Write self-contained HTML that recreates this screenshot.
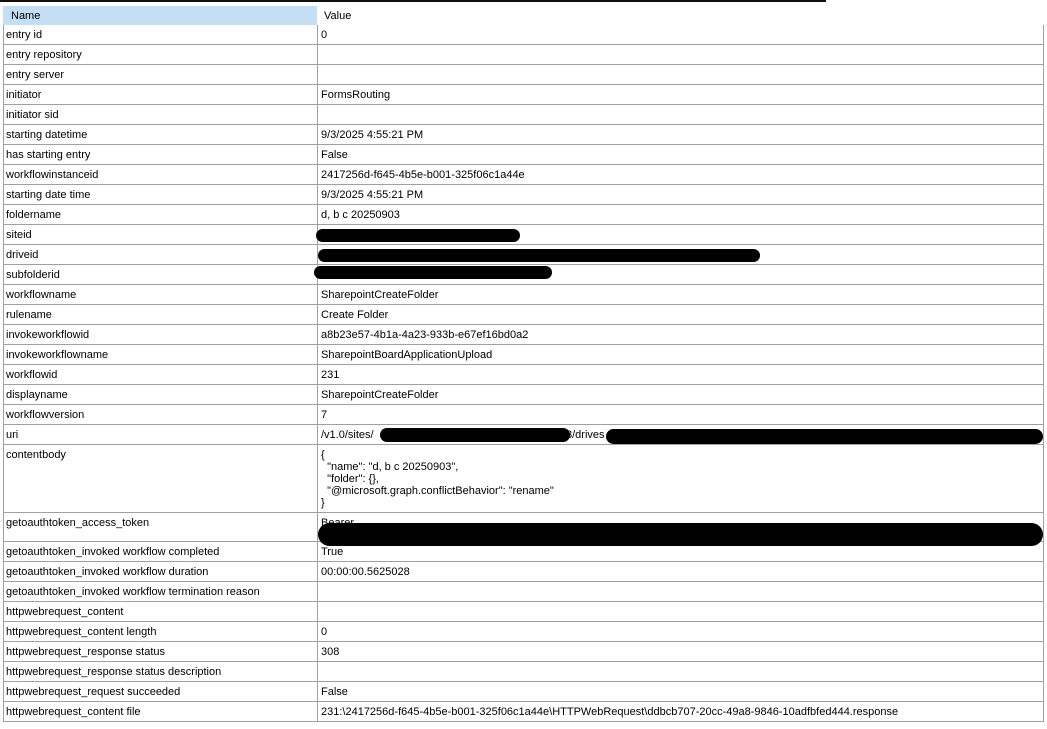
<!DOCTYPE html><html><head><style>
body{margin:0;width:1047px;height:729px;background:#fff;position:relative;overflow:hidden;font-family:"Liberation Sans",sans-serif;font-size:11px;color:#000}
.top{position:absolute;left:0;top:0;width:826px;height:2px;background:#111}
.hdr{position:absolute;top:6px;height:19px;line-height:20px}
.r{position:absolute;left:3px;width:1041px;border-bottom:1px solid #a0a0a0;border-left:1px solid #a0a0a0;border-right:1px solid #a0a0a0;box-sizing:border-box}
.n{position:absolute;left:2px;top:4px;white-space:nowrap}
.v{position:absolute;left:317px;top:4px;white-space:pre;line-height:12px}
.c{position:absolute;left:313px;top:0;bottom:0;border-left:1px solid #a0a0a0}
.b{position:absolute;background:#000;border-radius:8px}
</style></head><body>
<div class="top"></div>
<div class="hdr" style="left:3px;width:314px;background:#c3def5;"><span style="padding-left:8px">Name</span></div>
<div class="hdr" style="left:317px;width:727px;"><span style="padding-left:7px">Value</span></div>
<div id="rows"></div>
<script>
var d=[["entry id","0"],["entry repository",""],["entry server",""],["initiator","FormsRouting"],["initiator sid",""],["starting datetime","9/3/2025 4:55:21 PM"],["has starting entry","False"],["workflowinstanceid","2417256d-f645-4b5e-b001-325f06c1a44e"],["starting date time","9/3/2025 4:55:21 PM"],["foldername","d, b c 20250903"],["siteid",""],["driveid",""],["subfolderid",""],["workflowname","SharepointCreateFolder"],["rulename","Create Folder"],["invokeworkflowid","a8b23e57-4b1a-4a23-933b-e67ef16bd0a2"],["invokeworkflowname","SharepointBoardApplicationUpload"],["workflowid","231"],["displayname","SharepointCreateFolder"],["workflowversion","7"],["uri","/v1.0/sites/"],["contentbody","{\n  \"name\": \"d, b c 20250903\",\n  \"folder\": {},\n  \"@microsoft.graph.conflictBehavior\": \"rename\"\n}",68],["getoauthtoken_access_token","Bearer",29],["getoauthtoken_invoked workflow completed","True"],["getoauthtoken_invoked workflow duration","00:00:00.5625028"],["getoauthtoken_invoked workflow termination reason",""],["httpwebrequest_content",""],["httpwebrequest_content length","0"],["httpwebrequest_response status","308"],["httpwebrequest_response status description",""],["httpwebrequest_request succeeded","False"],["httpwebrequest_content file","231:\\2417256d-f645-4b5e-b001-325f06c1a44e\\HTTPWebRequest\\ddbcb707-20cc-49a8-9846-10adfbfed444.response"]];
var y=25,h="";
d.forEach(function(r){var hh=r[2]||20;h+='<div class="r" style="top:'+y+'px;height:'+hh+'px"><div class="c"></div><div class="n">'+r[0]+'</div><div class="v">'+r[1].replace(/&/g,"&amp;").replace(/</g,"&lt;")+'</div></div>';y+=hh;});
document.getElementById("rows").innerHTML=h;
</script>
<div style="position:absolute;left:566px;top:429px">3/drives</div>
<div class="b" style="left:316px;top:229px;width:204px;height:13px"></div>
<div class="b" style="left:318px;top:249px;width:442px;height:13px"></div>
<div class="b" style="left:314px;top:266px;width:238px;height:13px"></div>
<div class="b" style="left:380px;top:428px;width:190px;height:14px"></div>
<div class="b" style="left:606px;top:429px;width:437px;height:15px"></div>
<div class="b" style="left:318px;top:523px;width:725px;height:23px;border-radius:12px"></div>
</body></html>
